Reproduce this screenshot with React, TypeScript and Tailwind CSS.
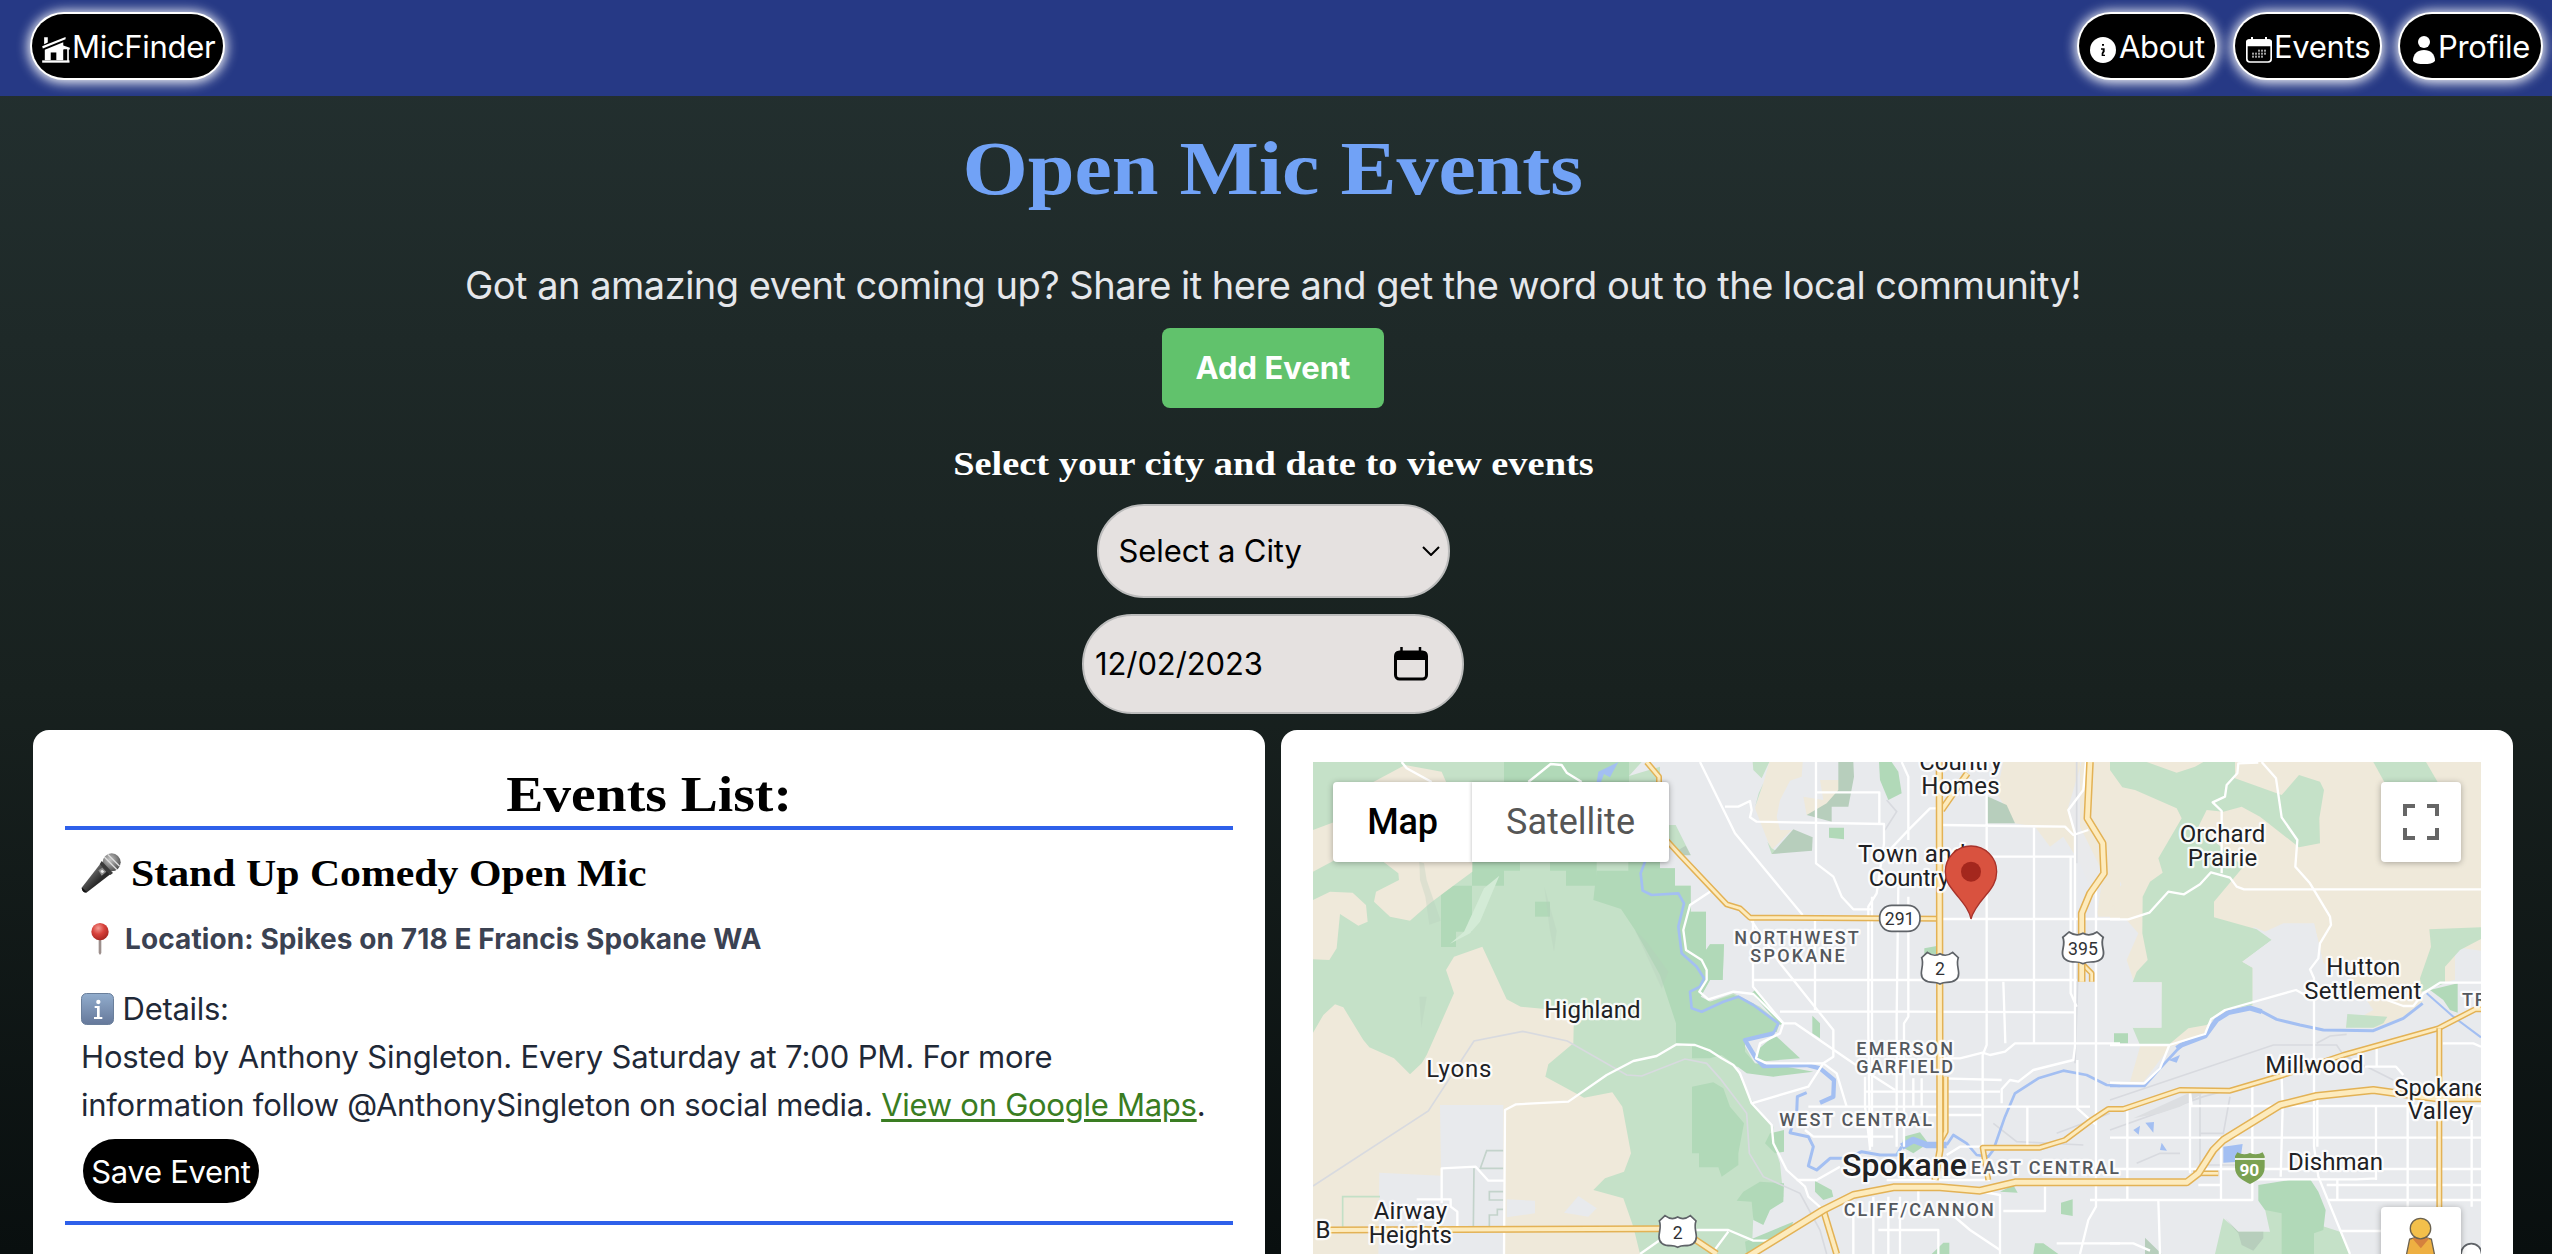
import type { ReactNode } from "react";

const BEIGE = "#efe9da";
const GREEN = "#c5e1c8";
const PARK = "#b1d9b8";
const SAGE = "#b7cebc";
const URBAN = "#e8eaed";
const WATER = "#a3bff2";

function NavButton({ className, children }: { className: string; children: ReactNode }) {
  return (
    <a
      className={`flex h-16 items-center rounded-full bg-black text-[31px] leading-none tracking-[-0.3px] text-white shadow-[0_0_0_2px_#fff,0_1px_12px_4px_rgba(255,255,255,0.95)] ${className}`}
    >
      {children}
    </a>
  );
}

function HouseIcon() {
  return (
    <svg viewBox="36 51 84 79" className="mt-2 h-[26px] w-7 shrink-0" fill="#fff">
      <path d="M42 52H53V68L42 73Z" />
      <path d="M36 79 107 51V58L38 86Z" />
      <path d="M44 90 100 67V122H44Z" />
      <path d="M62 98H79V122H62Z" fill="#000" />
      <path d="M98 76 120 84V89H98Z" />
      <path d="M102 89H112V122H102Z" fill="#000" />
      <path d="M112 86H117V124H112Z" />
      <path d="M36 122H119V129H36Z" />
    </svg>
  );
}

function InfoIcon() {
  return (
    <svg viewBox="0 0 78 78" className="mt-2 size-[26px] shrink-0">
      <circle cx="39" cy="39" r="39" fill="#fff" />
      <path d="M36 21h6v5h-6zM33 34h11v10l-4 6v3h5v4H35v-9l3-5v-5h-5z" fill="#000" />
    </svg>
  );
}

function EventsIcon() {
  const dots = [
    [36, 38], [45, 38], [54, 38],
    [18, 47], [27, 47], [36, 47], [45, 47], [54, 47],
    [18, 56], [27, 56], [36, 56], [45, 56],
  ];
  return (
    <svg viewBox="0 0 78 78" className="mt-2 size-[26px] shrink-0">
      <path d="M15 0h6v10h-6zM57 0h6v10h-6z" fill="#fff" />
      <rect x="2.5" y="9" width="73" height="66" rx="9" fill="none" stroke="#fff" strokeWidth="5" />
      <path d="M0 28V16Q0 7 9 7H69Q78 7 78 16V28Z" fill="#fff" />
      {dots.map(([x, y]) => (
        <rect key={`${x}-${y}`} x={x} y={y} width="6" height="6" fill="#a3a3a3" />
      ))}
    </svg>
  );
}

function PersonIcon() {
  return (
    <svg viewBox="0 0 66 84" className="mt-2 h-7 w-[22px] shrink-0" fill="#fff">
      <circle cx="33" cy="18" r="18" />
      <path d="M0 74C0 54 14 42 33 42S66 54 66 74C60 82 48 84 33 84S6 82 0 74Z" />
    </svg>
  );
}

function MicEmoji() {
  return (
    <svg viewBox="0 0 120 120" className="size-10 shrink-0">
      <defs>
        <linearGradient id="mic-body" x1="0" y1="0" x2="1" y2="1">
          <stop offset="0.3" stopColor="#6b6b6b" />
          <stop offset="0.6" stopColor="#2a2a2a" />
        </linearGradient>
        <radialGradient id="mic-head" cx="0.4" cy="0.35" r="0.7">
          <stop offset="0" stopColor="#c4c4c4" />
          <stop offset="1" stopColor="#4a4a4a" />
        </radialGradient>
      </defs>
      <path d="M58 32 88 64 18 118Q4 120 2 104Z" fill="url(#mic-body)" />
      <path d="M2 104Q8 106 18 118Q4 121 2 104Z" fill="#111" />
      <circle cx="92" cy="28" r="27" fill="url(#mic-head)" />
      <path d="M70 12 108 50M80 4 116 40" stroke="#ddd" strokeWidth="4" />
      <path d="M62 24 96 60 88 66 56 34Z" fill="#3a3a3a" />
      <path d="M52 52 64 44 76 56 62 68Z" fill="#8e8e8e" />
      <path d="M58 54 64 50 70 56 63 61Z" fill="#eee" />
    </svg>
  );
}

function PinEmoji() {
  return (
    <svg viewBox="0 0 60 96" className="ml-[9px] h-8 w-5 shrink-0">
      <defs>
        <radialGradient id="pin-head" cx="0.4" cy="0.3" r="0.7">
          <stop offset="0" stopColor="#f39b93" />
          <stop offset="0.5" stopColor="#d8413b" />
          <stop offset="1" stopColor="#a82722" />
        </radialGradient>
      </defs>
      <path d="M26 48h8v42l-4 6-4-6z" fill="#9c8f8c" />
      <circle cx="30" cy="26" r="26" fill="url(#pin-head)" />
    </svg>
  );
}

function InfoEmoji() {
  return (
    <svg viewBox="0 0 99 96" className="inline-block h-8 w-[33px] align-[-5px]">
      <defs>
        <linearGradient id="info-bg" x1="0" y1="0" x2="0" y2="1">
          <stop offset="0" stopColor="#92adcd" />
          <stop offset="1" stopColor="#65789a" />
        </linearGradient>
      </defs>
      <rect x="1.5" y="1.5" width="96" height="93" rx="15" fill="url(#info-bg)" stroke="#6a7f9b" strokeWidth="3" />
      <circle cx="52" cy="27" r="6.5" fill="#fff" />
      <path d="M41 39h15v33h8v6H39v-6h9V45h-7z" fill="#fff" />
    </svg>
  );
}

function Highway({ d, width = 12 }: { d: string; width?: number }) {
  return (
    <g fill="none" strokeLinejoin="round">
      <path d={d} stroke="#e3b255" strokeWidth={width + 9} />
      <path d={d} stroke="#fdebbd" strokeWidth={width} />
    </g>
  );
}

type LabelProps = { x: number; to: number; y: number; size?: number; weight?: number; fill?: string; children: string };

function Label({ x, to, y, size = 72, weight = 400, fill = "#202124", children }: LabelProps) {
  return (
    <text
      x={x - 4}
      y={y}
      textLength={to - x + 8}
      fontSize={size}
      fontWeight={weight}
      fill={fill}
      stroke="#fff"
      strokeOpacity="0.85"
      strokeWidth="14"
      strokeLinejoin="round"
      paintOrder="stroke"
    >
      {children}
    </text>
  );
}

function District({ x, to, y, children }: LabelProps) {
  return (
    <Label x={x} to={to} y={y} size={54} weight={500} fill="#54585d">
      {children}
    </Label>
  );
}

function UsShield({ x, y, wide = 1, children }: { x: number; y: number; wide?: number; children: string }) {
  return (
    <g transform={`translate(${x} ${y})`}>
      <path
        transform={`scale(${wide} 1)`}
        d="M-38-48C-25-38-10-38 0-44 10-38 25-38 38-48L55-32C48-15 56 0 56 15 56 35 40 42 20 42 8 42 4 45 0 47-4 45-8 42-20 42-40 42-56 35-56 15-56 0-48-15-55-32Z"
        fill="#fff"
        stroke="#5f6368"
        strokeWidth="5"
      />
      <text y="21" textAnchor="middle" fontSize="53" fill="#303134">
        {children}
      </text>
    </g>
  );
}

function MapDrawing() {
  return (
    <svg viewBox="99 96 3504 1476" className="block h-[492px] w-[1168px] font-['Roboto',sans-serif]">
      <rect x="99" y="96" width="3504" height="1476" fill={URBAN} />

      {/* western hills */}
      <path
        fill={GREEN}
        d="M99 96H1085L1047 138 1140 110V415H1185V467H1232V545H1278V660L1290 643H1332L1328 750H1290L1262 800 1290 815 1360 790 1440 830 1500 880 1490 905 1400 925 1390 940 1430 1010 1365 1010 1400 1080 1420 1120 1480 1190V1240L1500 1300 1510 1400 1420 1460 1415 1572H99Z"
      />
      <path fill={GREEN} d="M1167 285H1187L1232 375H1195L1167 345Z" />
      <path fill={SAGE} d="M1195 360 1217 347 1232 376H1205Z" />
      <g fill={PARK}>
        <path d="M672 96H1047V156H672Z" />
        <path d="M576 395H720V422H672V467H576V605H528V651H483V467H576Z" />
        <path d="M810 395H950V467H926V422L926 467H858V422H810Z" />
        <path d="M765 515H810V560H765Z" />
        <path d="M950 422H1045V395H1140V415H1185V467H1232V545H1278V660L1290 643H1332L1328 750H1290L1262 800 1290 815 1360 795 1430 830 1495 885 1490 905 1395 925V965L1425 1000 1520 1010 1600 1025 1480 1040 1400 1030 1325 975 1290 985H1236V945L1188 940V880L1140 735 1065 600 1023 537 940 510Z" />
        <path d="M1236 1070 1300 1057 1330 1075 1350 1130 1392 1180 1375 1270 1375 1305 1325 1340 1315 1312H1257V1270H1236Z" />
      </g>
      <g fill={BEIGE}>
        <path d="M99 300 165 275V390L99 425Z" />
        <path d="M280 156 375 105 485 125 500 160Z" />
        <path d="M310 395H577V425L520 467 450 520 390 572 330 560 282 515 288 485 357 450 355 430Z" />
        <path d="M99 510 150 485 218 488 258 525 263 575 235 587 180 552 170 655 148 690 99 688Z" />
        <path d="M99 908 130 855 165 823 190 832 250 930 268 952 342 985 390 1033 425 1000 440 975 522 790 498 720 522 680 607 650 680 808 722 830 882 845 880 940 805 1003 796 1040 912 1103 997 1087 1027 1130 1053 1270 1032 1325 975 1345 940 1380 1030 1405 1060 1490 1080 1572H99Z" />
      </g>
      <g fill={SAGE} opacity="0.3">
        <path d="M418 395 432 400 440 450 482 572 448 584 436 500 420 450Z" />
        <path d="M793 470 830 603 822 664 808 590Z" />
        <path d="M418 800H440L424 893Z" />
        <path d="M1065 600 1100 635 1165 725 1145 775Z" />
      </g>
      <path fill="#d3ebd6" d="M658 437 612 475 552 605 510 641 570 610 600 575Z" />
      <g fill={URBAN}>
        <path d="M480 1125H670V1572H295L298 1328 483 1337Z" />
        <path d="M680 1408 765 1412V1450L680 1462Z" />
        <path d="M852 1448 895 1398 950 1435 925 1460Z" />
      </g>
      <g fill="none" stroke="#c3d3cb" strokeWidth="5">
        <path d="M670 1262H620L601 1315H670M582 1315 580 1490M670 1385H628V1410H670M670 1438H652V1455H628V1490" />
        <path d="M188 1490V1400H300" stroke="#c3e0c6" />
      </g>

      {/* city parks */}
      <g transform="translate(1200 0)">
        <g fill={BEIGE}>
          <path d="M268 96H368L365 140 330 152 300 210 290 260 300 300 335 300 275 360 262 330 225 235 250 160Z" />
          <path d="M420 150H478L480 180 430 250 380 255 370 200 430 210Z" />
          <path d="M970 96H1320V560H1255L1230 470 1200 400 1150 320 1110 350 1065 290 1005 280 950 190Z" />
        </g>
        <path fill={URBAN} d="M1140 96H1205L1165 230 1185 310 1185 560H1250L1270 430 1200 290V96Z" opacity="0.9" />
        <path fill={GREEN} d="M218 96H268L245 145 220 120ZM250 160 225 232 236 190Z" />
        <path fill={GREEN} d="M262 335 275 372 300 370 275 355ZM1320 96H1290L1295 130 1320 160Z" />
        <g fill={SAGE}>
          <path d="M475 96H520L522 140 505 230H455V275L380 255 440 220 475 180Z" />
          <path d="M340 298 398 322 396 362 275 372Z" />
          <path d="M920 198 980 225 1005 280H920Z" />
        </g>
        <g fill={PARK}>
          <path d="M597 96H635L655 125 665 190 625 210 600 150Z" />
          <path d="M447 293H492V328L447 323Z" />
          <path d="M397 857 420 880V925L397 910Z" />
          <path d="M733 655 770 648V672H733Z" />
          <path d="M225 780 310 880 300 885 215 790Z" />
          <path d="M285 915 360 985 235 995 232 960Z" />
          <path d="M270 1210 312 1200V1265L285 1270 255 1240Z" />
          <path d="M190 1385 240 1355 312 1360 310 1415 270 1440 250 1485 220 1470 215 1415 170 1412Z" />
          <path d="M405 1353 455 1380 460 1400 430 1410 405 1385Z" />
          <path d="M195 1535 340 1475 330 1500 200 1572Z" />
          <path d="M670 1220 720 1207 745 1240 700 1270 665 1250Z" />
          <path d="M960 1385 1000 1365 1013 1388Z" />
          <path d="M1143 1418 1178 1408V1458L1143 1452Z" />
          <path d="M755 1572 790 1538H808V1572ZM1065 1540 1090 1540 1135 1572H1060Z" />
        </g>
      </g>

      {/* eastern foothills */}
      <g transform="translate(2490 0)">
        <path
          fill={BEIGE}
          d="M0 96H1113V750H1030L1000 760 935 785 938 815 880 860 800 893 700 890 790 840 720 740 640 700 612 580 520 580 465 605 430 590V830L300 870 280 920 180 950 100 1055H60L90 950 113 690 70 750 50 690 85 610 50 570H0V510L15 545 5 490 35 465 0 390Z"
        />
        <path
          fill={GREEN}
          d="M0 96H110L200 128 255 110 280 96H375V145L515 195 567 135 630 155 642 180 628 265 630 340 567 352 450 260 395 230 340 245 290 240 265 290 400 410 312 515V562L440 598 485 630 397 695 428 713V825L345 840 290 885 235 895 175 945H90L68 893H152L155 757H68L80 725 113 690 97 610 98 500 120 455 158 428 145 385 215 265 200 235 75 180 37 172 0 120Z"
        />
        <path fill={URBAN} d="M397 695 485 630 540 590 612 580 640 700 720 760 790 840 700 850 708 893 600 880 428 825V713Z" />
        <path fill={URBAN} d="M68 757H155V893H68ZM1035 660 1060 655 1113 662V755H1035Z" />
        <path fill={GREEN} d="M790 96H948L985 160H825Z" />
        <path fill={GREEN} d="M958 598 1113 592V627L1050 660 1005 710V760L935 785 930 745 963 650ZM712 852 832 860 820 880 790 893H708Z" />
        <path fill={PARK} d="M960 780 1043 760V848L1020 840 1000 810ZM12 910H54V940H12Z" />
        <path fill={GREEN} d="M340 1465 385 1505H480L460 1415 520 1450 690 1505 720 1572H315Z" />
        <path fill={PARK} d="M445 1365 555 1347H600L625 1385 647 1440 640 1500 612 1510V1572H515V1450L465 1440 445 1412Z" />
        <path fill={SAGE} d="M345 1465 385 1505H460V1525L430 1562 395 1545 385 1510ZM105 1523 155 1572H105Z" />
      </g>

      {/* rail lines */}
      <g fill="none" stroke="#d8dadf" strokeWidth="5">
        <path d="M99 1368 445 1143 582 933 728 904 862 933 1040 1035 1085 1038 1215 987 1280 1000 1320 1045 1400 1150 1408 1270 1450 1340 1560 1390 1620 1500 1640 1572" />
        <path d="M2490 1110 2980 945H3170L3190 975 3340 1050M2490 1200 2770 1100 2880 1070M2330 1210 2490 1150M2140 1180 2210 1235 2410 1245M3110 940 3150 918 3200 913M2760 1080V1210H2830L2850 1100M2760 1210V1305H2900M2570 1300 2640 1270H2700M2390 400V96M2395 700 2385 1000M1820 210 1850 245 1815 300" />
      </g>
      <path d="M2560 1165 2720 1092 2790 1078 2700 1130 2640 1150Z" fill="#dcdee1" />

      {/* water */}
      <g fill="none" stroke={WATER} strokeLinejoin="round">
        <path strokeWidth="8" d="M2490 1068H2593L2640 1015 2705 945" />
        <path strokeWidth="15" d="M2690 955 2705 945 2775 918 2810 870 2845 848 2910 834 2945 845" />
        <path strokeWidth="9" d="M2940 842 2990 868 3060 885 3130 900 3280 902 3370 865 3428 820" />
        <path strokeWidth="6" d="M3440 790 3520 860 3603 922" />
        <path strokeWidth="8" d="M2520 1068 2480 1065 2420 1035 2350 1022 2275 1045 2205 1090 2175 1160 2140 1260 2125 1280 2090 1275 2060 1240 2020 1215 2000 1245" />
        <path strokeWidth="20" d="M2000 1245H1940L1900 1230 1865 1250" />
        <path strokeWidth="9" d="M1865 1250 1850 1275H1800L1745 1265 1700 1285H1650L1610 1320 1585 1308 1600 1250 1585 1220 1530 1208 1550 1150 1552 1100 1580 1088" />
        <path strokeWidth="13" d="M1620 1118 1660 1100 1662 1050 1620 1015 1580 1005 1450 1008 1428 985 1395 930 1480 910" />
        <path strokeWidth="8" d="M1395 930 1480 910 1495 880 1420 825 1375 800 1330 815 1265 845 1235 835 1230 785 1260 770 1272 745 1250 710 1205 670 1195 590 1212 520 1195 490 1115 495 1088 482 1082 430 1095 395" />
      </g>
      <g fill={WATER}>
        <path d="M950 156 955 125 1015 96 990 142 972 132 963 156Z" />
        <path d="M2830 1250 2888 1242 2880 1295 2830 1298ZM2560 1200 2580 1187 2576 1214ZM2596 1178 2622 1176 2620 1208ZM2645 1238 2661 1262 2640 1260ZM2665 990 2700 975 2690 998Z" />
      </g>

      {/* streets */}
      <g fill="none" stroke="#fff" strokeWidth="7" strokeLinejoin="round">
        <path d="M672 1572 675 1140 708 1123 865 1115 980 1035 1060 993 1130 978 1190 943 1245 945 1290 962 1325 985 1360 1005 1380 1030 1415 1120 1475 1185 1480 1240 1520 1320 1575 1370 1585 1400 1630 1440" />
        <path d="M485 1420V1315L587 1310 625 1352H672M410 1408H512V1430L532 1445V1495M365 96 380 115 455 156M745 156 812 102 845 105 860 128 905 156" />
        <path d="M1290 485 1230 525 1210 600 1218 660 1265 690 1280 720V750L1258 785 1285 808 1360 785 1420 792 1510 880 1500 910 1440 940 1428 985 1460 1000 1630 1000 1660 980V900L1500 700 1410 565" />
        <g transform="translate(1200 0)">
          <path d="M60 96 165 310 368 555M135 230H175L210 213 215 240 210 262 230 275 612 282V340L590 490 565 530V910L570 1260M410 187H598V278" />
          <path d="M408 96V400L460 440 485 500 520 538H575M665 96 685 140V330M778 235H750L690 295 610 380" />
          <path d="M785 285 1155 290 1180 315 1225 300M920 180V945L908 975V1250M1062 290V940M780 380H1185M780 567H1320M220 750H1190M300 845H680L1185 847" />
          <path d="M219 570V770L310 880H345L520 1000 645 1080M405 570V840M655 470 650 860V1250M685 500V860L672 880V1250M576 500V1250" />
          <path d="M780 985H840L908 968 930 975 975 965 1005 940H1320M785 1045 965 1050M555 1085H960M385 1130 H1230M700 1155H905M375 1200 400 1220H640M970 755 976 940" />
          <path d="M965 1120V1078L990 1050 1015 1055 1060 1020 1180 990 1185 950V310L1165 240 1210 180 1218 96M1248 450V1430L1225 1470 1200 1572M1172 380V790L1190 830M1192 990V1135L1248 1185V1240" />
          <path d="M1042 1130V1250M555 1040V1130L570 1250M700 1045V1130M725 1045V1130M215 1120 385 1070 430 1000 470 1030 500 1130M880 1380 960 1395V1572M970 1443H1095V1370M595 1500H775V1572M1230 1410H1320M580 1400V1572" />
          <path d="M-200 1500H145L220 1532H270L430 1440M-120 1572 -60 1530M95 1572 145 1505M800 1440 870 1500 960 1560M1130 1540H1320M500 1410 520 1450V1572M625 1400V1572M660 1400V1572M715 1380V1430M350 1350H410L480 1310M905 1250H840L800 1275M625 1300H780M620 1350H930" />
        </g>
        <g transform="translate(2490 0)">
          <path d="M445 98 385 100 382 130 350 165 345 200 308 217 335 243V430M455 96 498 145 515 262 562 330 556 410 600 460 660 560 663 585 630 640 625 685 600 718 612 745V1250L625 1340 720 1572" />
          <path d="M0 568H55L118 548 175 485 222 493 270 463 303 427 360 443 380 470 402 478H1113M612 810 558 780 345 840 303 868 285 912 178 945 150 1015 103 1060 0 1058M0 945H178M830 810 880 828H910L940 790 990 758H1113" />
          <path d="M0 1223H1113M240 1128H1113M0 1317H1113M265 1365H330M650 1365H1113M0 1410H427V1070M52 1137V1410M245 1128 240 1085V1330M333 1230V1410M515 1040 518 1130 512 1340" />
          <path d="M798 1128V1350M893 1128V1430M1085 1170V1430M655 1410H1113M690 1503H813M440 1348H740L800 1345M682 1345V1410M145 1410 150 1572M0 1540H70L120 1562M765 1010H858L880 1035M800 955V1010M998 940H1090L1113 950M622 1098V1250" />
        </g>
      </g>

      {/* highways */}
      <Highway d="M1100 96 1137 140V200L1150 320 1200 375 1340 523 1380 535 1410 563 1980 566" width={9} />
      <Highway d="M150 1500 1140 1496" />
      <Highway d="M1190 1500 1240 1525 1310 1572" />
      <Highway d="M2062 130 1985 240" />
      <Highway d="M1997 1040V1205L1980 1235" width={9} />
      <Highway d="M1978 96 1980 1260 1965 1350" width={13} />
      <Highway d="M2405 700 2435 730V755" width={8} />
      <Highway d="M2430 96 2422 265 2468 340 2472 430 2430 490 2405 550V755" width={14} />
      <Highway d="M2125 1350 2108 1253H2280L2355 1230 2435 1170 2485 1137H2530L2700 1080 2850 1082 3010 1035 3190 975 3475 895 3585 838H3603" width={9} />
      <Highway d="M3478 895V1450" width={9} />
      <Highway d="M1630 1440 1670 1572" />
      <Highway d="M2740 1330H2815" width={8} />
      <Highway
        d="M1400 1582 1630 1440 1720 1395 1840 1372H1980L2100 1382 2205 1357H2720L2755 1330 2800 1260 2830 1230 3000 1125 3110 1098 3280 1080 3350 1090 3470 1105H3603"
        width={15}
      />

      {/* place names */}
      <Label x={797} to={1078} y={863}>Highland</Label>
      <Label x={443} to={630} y={1040}>Lyons</Label>
      <Label x={285} to={497} y={1467}>Airway</Label>
      <Label x={270} to={512} y={1540}>Heights</Label>
      <Label x={63} to={147} y={1523}>FB</Label>
      <g transform="translate(1200 0)">
        <Label x={722} to={962} y={120}>Country</Label>
        <Label x={728} to={955} y={193}>Homes</Label>
        <Label x={538} to={853} y={397}>Town and</Label>
        <Label x={570} to={805} y={467}>Country</Label>
        <District x={167} to={532} y={643}>NORTHWEST</District>
        <District x={215} to={490} y={697}>SPOKANE</District>
        <District x={533} to={815} y={976}>EMERSON</District>
        <District x={533} to={815} y={1029}>GARFIELD</District>
        <District x={302} to={752} y={1189}>WEST CENTRAL</District>
        <District x={877} to={1313} y={1332}>EAST CENTRAL</District>
        <District x={495} to={937} y={1457}>CLIFF/CANNON</District>
        <Label x={490} to={857} y={1337} size={96} weight={500}>Spokane</Label>
      </g>
      <g transform="translate(2490 0)">
        <Label x={213} to={462} y={337}>Orchard</Label>
        <Label x={237} to={438} y={408}>Prairie</Label>
        <Label x={653} to={867} y={736}>Hutton</Label>
        <Label x={587} to={930} y={806}>Settlement</Label>
        <Label x={470} to={757} y={1028}>Millwood</Label>
        <Label x={857} to={1127} y={1098}>Spokane</Label>
        <Label x={897} to={1085} y={1168}>Valley</Label>
        <Label x={538} to={815} y={1319}>Dishman</Label>
        <District x={1060} to={1420} y={827}>TRENTWOOD</District>
      </g>

      {/* route shields */}
      <rect x="1799" y="526" width="121" height="78" rx="36" fill="#fff" stroke="#5f6368" strokeWidth="5" />
      <text x="1859" y="585" textAnchor="middle" fontSize="53" fill="#303134">291</text>
      <UsShield x={1980} y={715}>2</UsShield>
      <UsShield x={2409} y={654} wide={1.1}>395</UsShield>
      <UsShield x={1193} y={1505}>2</UsShield>
      <g transform="translate(2910 1267)">
        <path d="M-38 0Q-20 10 0 2 20 10 38 0L44 12V45C44 75 20 85 0 95-20 85-45 75-45 45V12Z" fill="#7aa152" />
        <path d="M-45 20H45" stroke="#fff" strokeWidth="5" />
        <text x="-2" y="71" textAnchor="middle" fontSize="52" fontWeight="700" fill="#fff">90</text>
      </g>
      <circle cx="3574" cy="1572" r="31" fill="#fff" stroke="#5f6368" strokeWidth="5" />

      {/* event marker */}
      <path
        d="M2073 567C2068 540 2050 520 2030 495 2010 470 1996 455 1996 425A77 77 0 0 1 2150 425C2150 455 2135 475 2118 495 2095 522 2078 545 2073 567Z"
        fill="#d9523f"
        stroke="#a8322a"
        strokeWidth="4"
      />
      <circle cx="2073" cy="425" r="30" fill="#a4271d" />
    </svg>
  );
}

function MapPanel() {
  return (
    <div className="relative h-[492px] w-full overflow-hidden font-['Roboto',sans-serif]">
      <MapDrawing />
      <div className="absolute left-5 top-5 flex h-20 rounded-[4px] bg-white text-4xl shadow-[0_1px_6px_rgba(0,0,0,0.3)]">
        <button className="w-[139px] font-medium tracking-[-0.2px] text-black">Map</button>
        <button className="w-[197px] text-[#565656] shadow-[-1px_0_3px_rgba(0,0,0,0.18)]">Satellite</button>
      </div>
      <button className="absolute right-5 top-5 flex size-20 items-center justify-center rounded-[4px] bg-white shadow-[0_1px_6px_rgba(0,0,0,0.3)]">
        <svg viewBox="0 0 36 36" className="size-9" fill="none" stroke="#666" strokeWidth="4">
          <path d="M2 12V2H12M24 2H34V12M34 24V34H24M12 34H2V24" />
        </svg>
      </button>
      <div className="absolute right-5 top-[445px] flex size-20 justify-center rounded-[4px] bg-white pt-2.5 shadow-[0_1px_6px_rgba(0,0,0,0.3)]">
        <svg viewBox="-50 0 100 210" className="ml-[-2px] h-[70px] w-[33px]" stroke="#6b6250" strokeWidth="4">
          <path d="M-33 66Q0 54 33 66L48 140H-48Z" fill="#eeb042" />
          <path d="M-25 63H27L1 94Z" fill="#d5813d" stroke="none" />
          <circle cx="0" cy="34" r="31" fill="#f3c04b" />
        </svg>
      </div>
    </div>
  );
}

function EventsList() {
  return (
    <>
      <h2 className="border-b-4 border-[#2e60ea] text-center font-['Liberation_Serif',serif] text-[51px] font-bold leading-[64px] text-black">
        <span className="inline-block scale-x-[1.09]">Events List:</span>
      </h2>
      <article className="border-b-4 border-[#2e60ea] pb-[18px] pl-4 pt-[19px]">
        <h3 className="flex h-12 items-center font-['Liberation_Serif',serif] text-[38px] font-bold leading-[48px] text-black">
          <MicEmoji />
          <span className="ml-2.5 inline-block origin-left scale-x-[1.1]">Stand Up Comedy Open Mic</span>
        </h3>
        <p className="mt-[22px] flex h-10 items-center text-[28px] font-bold leading-10 tracking-[0.1px] text-[#3b4252]">
          <PinEmoji />
          <span className="ml-[15px]">Location: Spikes on 718 E Francis Spokane WA</span>
        </p>
        <p className="mt-[26px] whitespace-nowrap text-[31px] leading-[48px] tracking-[-0.14px] text-[#1f2937]">
          <InfoEmoji /> <span className="tracking-[-0.3px]">Details:</span>
          <br />
          Hosted by Anthony Singleton. Every Saturday at 7:00 PM. For more
          <br />
          <span className="tracking-[-0.26px]">
            information follow @AnthonySingleton on social media.{" "}
            <a className="text-[#3a7d22] underline decoration-[3px] underline-offset-[3px]">View on Google Maps</a>.
          </span>
        </p>
        <button className="ml-0.5 mt-2.5 block h-16 w-44 rounded-full bg-black text-[31px] leading-none tracking-[-0.3px] text-white">
          Save Event
        </button>
      </article>
    </>
  );
}

export default function App() {
  return (
    <div className="h-[1254px] overflow-hidden bg-linear-to-b from-[#243131] from-0% via-[#18211f] via-55% to-[#090f0f] to-100% font-['Inter',sans-serif]">
      <nav className="flex h-24 justify-between bg-[#263985] pl-8 pr-[11px] pt-3.5">
        <NavButton className="w-[191px] gap-0.5 pl-2.5">
          <HouseIcon />
          <span>MicFinder</span>
        </NavButton>
        <div className="flex gap-5">
          <NavButton className="w-[136px] gap-[3px] pl-[11px]">
            <InfoIcon />
            <span>About</span>
          </NavButton>
          <NavButton className="w-[145px] gap-0.5 pl-[11px]">
            <EventsIcon />
            <span>Events</span>
          </NavButton>
          <NavButton className="w-[141px] gap-[3px] pl-[13px]">
            <PersonIcon />
            <span>Profile</span>
          </NavButton>
        </div>
      </nav>

      <main className="ml-[33px] w-[2480px]">
        <header className="flex flex-col items-center">
          <h1 className="mt-[18px] scale-x-[1.105] font-['Liberation_Serif',serif] text-[76px] font-bold leading-[108px] text-[#71a2f6]">
            Open Mic Events
          </h1>
          <p className="mt-[35px] text-[38px] leading-[56px] tracking-[-0.5px] text-[#e5e7eb]">
            Got an amazing event coming up? Share it here and get the word out to the local community!
          </p>
          <button className="mt-[15px] h-20 w-[222px] rounded-lg bg-[#61c26c] text-[31px] font-bold text-white">
            Add Event
          </button>
          <h2 className="mt-9 scale-x-[1.13] font-['Liberation_Serif',serif] text-[34px] font-bold leading-10 text-white">
            Select your city and date to view events
          </h2>
          <div className="mt-5 flex h-[94px] w-[353px] items-center justify-between rounded-full border-2 border-[#bcbcbc] bg-[#e5e1e0] pl-5 pr-2 text-[31px] tracking-[-0.1px] text-black">
            <span>Select a City</span>
            <svg viewBox="0 0 18 10" className="h-2.5 w-[18px]" fill="none" stroke="#000" strokeWidth="2">
              <path d="M1 1 9 9 17 1" />
            </svg>
          </div>
          <div className="mt-4 flex h-[100px] w-[382px] items-center justify-between rounded-full border-2 border-[#bcbcbc] bg-[#e5e1e0] pl-[11px] pr-[34px] text-[31px] tracking-[-0.1px] text-black">
            <span>12/02/2023</span>
            <svg viewBox="0 0 34 34" className="h-[34px] w-[34px]">
              <path d="M7.500 0V6M26 0V6" stroke="#000" strokeWidth="2.500" />
              <rect x="1.500" y="5" width="31" height="27" rx="4" fill="none" stroke="#000" strokeWidth="3" />
              <path d="M1 13V8Q1 4 5 4H29Q33 4 33 8V13Z" />
            </svg>
          </div>
        </header>
        <section className="mt-4 flex gap-4">
          <div className="h-[560px] flex-1 rounded-2xl bg-white p-8">
            <EventsList />
          </div>
          <div className="h-[560px] flex-1 rounded-2xl bg-white p-8">
            <MapPanel />
          </div>
        </section>
      </main>
    </div>
  );
}
